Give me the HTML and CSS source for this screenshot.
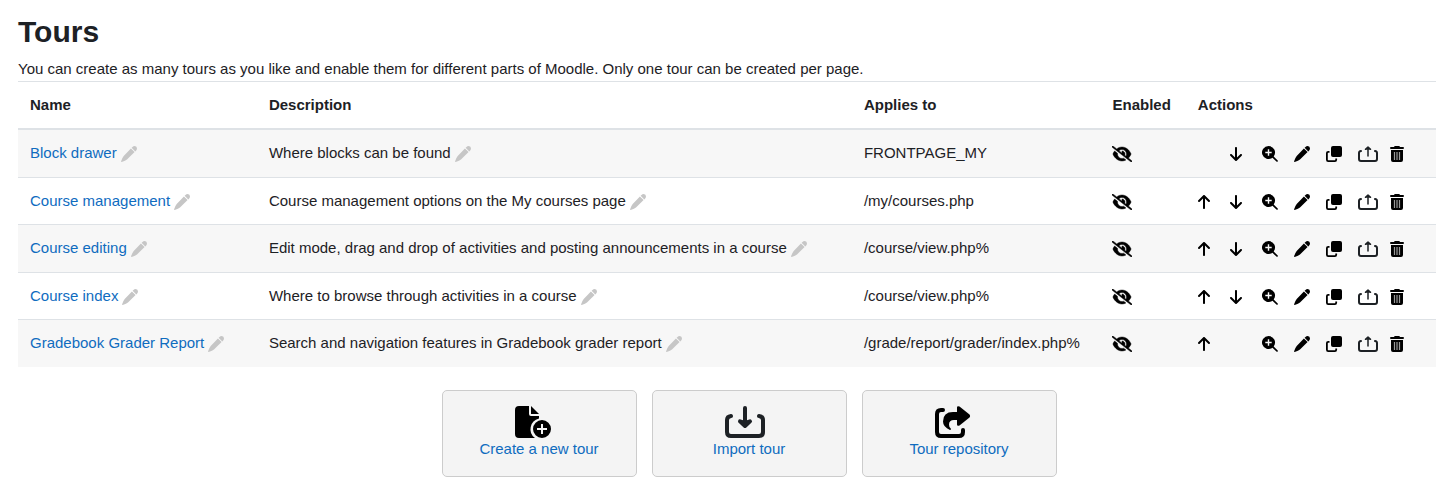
FILE: index.html
```html
<!DOCTYPE html>
<html lang="en">
<head>
<meta charset="utf-8">
<meta name="viewport" content="width=device-width, initial-scale=1">
<title>Tours</title>
<link rel="stylesheet" href="styles.css">
</head>
<body>
<svg class="sprite" aria-hidden="true">
  <symbol id="eye-slash" viewBox="0 0 640 512"><path stroke="currentColor" stroke-width="14" d="M38.8 5.1C28.4-3.1 13.3-1.2 5.1 9.2S-1.2 34.7 9.2 42.9l592 464c10.4 8.2 25.5 6.3 33.7-4.1s6.3-25.5-4.1-33.7L525.6 386.7c39.6-40.6 66.4-86.1 79.9-118.4c3.3-7.9 3.3-16.7 0-24.6c-14.9-35.7-46.2-87.7-93-131.1C465.5 68.8 400.8 32 320 32c-68.2 0-125 26.3-169.3 60.8L38.8 5.1zM223.1 149.5C248.6 126.2 282.7 112 320 112c79.5 0 144 64.5 144 144c0 24.9-6.3 48.3-17.4 68.7L408 294.5c8.4-19.3 10.6-41.4 4.8-63.3c-11.1-41.5-47.8-69.4-88.6-71.1c-5.8-.2-9.2 6.1-7.4 11.7c2.1 6.4 3.3 13.2 3.3 20.3c0 10.2-2.4 19.8-6.6 28.3l-90.3-70.8zM373 389.9c-16.4 6.5-34.3 10.1-53 10.1c-79.5 0-144-64.5-144-144c0-6.9 .5-13.6 1.4-20.2L83.1 161.5C60.3 191.2 44 220.8 34.5 243.7c-3.3 7.9-3.3 16.7 0 24.6c14.9 35.7 46.2 87.7 93 131.1C174.5 443.2 239.2 480 320 480c47.8 0 89.9-12.9 126.2-32.5L373 389.9z"/></symbol>
  <symbol id="up" viewBox="0 0 384 512"><path d="M214.6 41.4c-12.5-12.5-32.8-12.5-45.3 0l-160 160c-12.5 12.5-12.5 32.8 0 45.3s32.8 12.5 45.3 0L160 141.2V448c0 17.7 14.3 32 32 32s32-14.3 32-32V141.2L329.4 246.6c12.5 12.5 32.8 12.5 45.3 0s12.5-32.8 0-45.3l-160-160z"/></symbol>
  <symbol id="down" viewBox="0 0 384 512"><path transform="matrix(1 0 0 -1 0 512)" d="M214.6 41.4c-12.5-12.5-32.8-12.5-45.3 0l-160 160c-12.5 12.5-12.5 32.8 0 45.3s32.8 12.5 45.3 0L160 141.2V448c0 17.7 14.3 32 32 32s32-14.3 32-32V141.2L329.4 246.6c12.5 12.5 32.8 12.5 45.3 0s12.5-32.8 0-45.3l-160-160z"/></symbol>
  <symbol id="magnify" viewBox="0 0 16 16"><path fill-rule="evenodd" d="M6.5 0a6.5 6.5 0 0 1 5.2 10.4l4 4q.5.7 0 1.2-.6.5-1.3 0l-4-3.9A6.5 6.5 0 1 1 6.5 0zM5.8 3.3v2.5H3.3v1.4h2.500v2.500h1.400V7.200h2.500V5.800H7.200V3.300z"/></symbol>
  <symbol id="pencil" viewBox="0 0 16 16"><path d="M11.200 1.200Q12.400 0 13.700 0 16 .2 16 2.400 16 3.700 14.800 4.900L14.300 5.400 10.600 1.700zM9.900 2.400L13.600 6.100 6 13.400Q4.500 14.700 .7 15.900 0 16 .1 15.300 1.300 11.500 2.700 9.900z"/></symbol>
  <symbol id="copy" viewBox="0 0 16 16"><rect x="5" y="0" width="11" height="11" rx="2"/><path d="M3.500 5.800H2.200Q.9 5.800.9 7.100v6.700q0 1.300 1.300 1.300h6.700q1.300 0 1.300-1.300v-1.300" fill="none" stroke="currentColor" stroke-width="1.800"/></symbol>
  <symbol id="export" viewBox="0 0 40 32"><g fill="none" stroke="currentColor" stroke-width="4" stroke-linecap="round" stroke-linejoin="round"><path d="M6 10Q2 10.500 2 14V26Q2 30 6 30H34Q38 30 38 26V14Q38 10.500 34 10"/><path d="M20 3V20M15 6.700L20 2 25 6.700L20 5z" stroke-width="3" fill="currentColor"/></g></symbol>
  <symbol id="trash" viewBox="0 0 14 16"><path d="M4.200 .6Q4.500 0 5.200 0H8.800Q9.500 0 9.800.6L10.100 1H13Q14 1 14 2T13 3H1Q0 3 0 2T1 1H3.900zM1 4H13V14Q13 16 11 16H3Q1 16 1 14z"/><path d="M4.500 6V14M7 6V14M9.500 6V14" stroke="#999" stroke-width="1.200"/></symbol>
  <symbol id="new-file" viewBox="0 0 48 32"><path d="M4 0H14V8Q14 10 16 10H24V12.400A11 11 0 0 0 20 32H4Q0 32 0 28V4Q0 0 4 0zM16 0L24 8H16z"/><path fill-rule="evenodd" d="M27 14a9 9 0 1 1 0 18 9 9 0 0 1 0-18zM26 18V22H22V24H26V28H28V24H32V22H28V18z"/></symbol>
  <symbol id="import" viewBox="0 0 48 32"><g fill="none" stroke="currentColor" stroke-width="4" stroke-linecap="round" stroke-linejoin="round"><path d="M6 10Q2 10.500 2 14V26Q2 30 6 30H34Q38 30 38 26V14Q38 10.500 34 10"/><path d="M20 2V18M15 15.300L20 20 25 15.300L20 17z" fill="currentColor"/></g></symbol>
  <symbol id="share" viewBox="0 0 48 32"><path d="M8 4H6Q2 4 2 8V26Q2 30 6 30H24Q28 30 28 26V24" fill="none" stroke="#000" stroke-width="4" stroke-linecap="round"/><path d="M22 1.500Q22-.5 24.500.5L34.500 8.600Q35.700 10 34.500 11.400L24.500 19.500Q22 20.500 22 18.500V14H19Q14 14 14 18.500Q14 21 15.600 22.300Q16.500 24 15 24Q8 21 8 15.500Q8 6 18 6H22z"/></symbol>
</svg>
<main class="page">
  <h2 class="title">Tours</h2>
  <p class="intro">You can create as many tours as you like and enable them for different parts of Moodle. Only one tour can be created per page.</p>
  <table class="tours">
    <colgroup><col class="col-name"><col class="col-description"><col class="col-applies"><col class="col-enabled"><col></colgroup>
    <thead>
      <tr><th scope="col">Name</th><th scope="col">Description</th><th scope="col">Applies to</th><th scope="col">Enabled</th><th scope="col">Actions</th></tr>
    </thead>
    <tbody>
      <tr>
        <td><div class="editable"><a href="#">Block drawer</a><a class="edit" href="#" aria-label="Edit name"><svg class="icon"><use href="#pencil"/></svg></a></div></td>
        <td><div class="editable"><span>Where blocks can be found</span><a class="edit" href="#" aria-label="Edit description"><svg class="icon"><use href="#pencil"/></svg></a></div></td>
        <td>FRONTPAGE_MY</td>
        <td><div class="actions"><a href="#" aria-label="Enable"><svg class="icon wide"><use href="#eye-slash"/></svg></a></div></td>
        <td><div class="actions"><span></span><a href="#" aria-label="Move down"><svg class="icon arrow"><use href="#down"/></svg></a><a href="#" aria-label="View"><svg class="icon"><use href="#magnify"/></svg></a><a href="#" aria-label="Edit"><svg class="icon"><use href="#pencil"/></svg></a><a href="#" aria-label="Duplicate"><svg class="icon"><use href="#copy"/></svg></a><a class="soft" href="#" aria-label="Export"><svg class="icon wide"><use href="#export"/></svg></a><a href="#" aria-label="Delete"><svg class="icon bin"><use href="#trash"/></svg></a></div></td>
      </tr>
      <tr>
        <td><div class="editable"><a href="#">Course management</a><a class="edit" href="#" aria-label="Edit name"><svg class="icon"><use href="#pencil"/></svg></a></div></td>
        <td><div class="editable"><span>Course management options on the My courses page</span><a class="edit" href="#" aria-label="Edit description"><svg class="icon"><use href="#pencil"/></svg></a></div></td>
        <td>/my/courses.php</td>
        <td><div class="actions"><a href="#" aria-label="Enable"><svg class="icon wide"><use href="#eye-slash"/></svg></a></div></td>
        <td><div class="actions"><a href="#" aria-label="Move up"><svg class="icon arrow"><use href="#up"/></svg></a><a href="#" aria-label="Move down"><svg class="icon arrow"><use href="#down"/></svg></a><a href="#" aria-label="View"><svg class="icon"><use href="#magnify"/></svg></a><a href="#" aria-label="Edit"><svg class="icon"><use href="#pencil"/></svg></a><a href="#" aria-label="Duplicate"><svg class="icon"><use href="#copy"/></svg></a><a class="soft" href="#" aria-label="Export"><svg class="icon wide"><use href="#export"/></svg></a><a href="#" aria-label="Delete"><svg class="icon bin"><use href="#trash"/></svg></a></div></td>
      </tr>
      <tr>
        <td><div class="editable"><a href="#">Course editing</a><a class="edit" href="#" aria-label="Edit name"><svg class="icon"><use href="#pencil"/></svg></a></div></td>
        <td><div class="editable"><span>Edit mode, drag and drop of activities and posting announcements in a course</span><a class="edit" href="#" aria-label="Edit description"><svg class="icon"><use href="#pencil"/></svg></a></div></td>
        <td>/course/view.php%</td>
        <td><div class="actions"><a href="#" aria-label="Enable"><svg class="icon wide"><use href="#eye-slash"/></svg></a></div></td>
        <td><div class="actions"><a href="#" aria-label="Move up"><svg class="icon arrow"><use href="#up"/></svg></a><a href="#" aria-label="Move down"><svg class="icon arrow"><use href="#down"/></svg></a><a href="#" aria-label="View"><svg class="icon"><use href="#magnify"/></svg></a><a href="#" aria-label="Edit"><svg class="icon"><use href="#pencil"/></svg></a><a href="#" aria-label="Duplicate"><svg class="icon"><use href="#copy"/></svg></a><a class="soft" href="#" aria-label="Export"><svg class="icon wide"><use href="#export"/></svg></a><a href="#" aria-label="Delete"><svg class="icon bin"><use href="#trash"/></svg></a></div></td>
      </tr>
      <tr>
        <td><div class="editable"><a href="#">Course index</a><a class="edit" href="#" aria-label="Edit name"><svg class="icon"><use href="#pencil"/></svg></a></div></td>
        <td><div class="editable"><span>Where to browse through activities in a course</span><a class="edit" href="#" aria-label="Edit description"><svg class="icon"><use href="#pencil"/></svg></a></div></td>
        <td>/course/view.php%</td>
        <td><div class="actions"><a href="#" aria-label="Enable"><svg class="icon wide"><use href="#eye-slash"/></svg></a></div></td>
        <td><div class="actions"><a href="#" aria-label="Move up"><svg class="icon arrow"><use href="#up"/></svg></a><a href="#" aria-label="Move down"><svg class="icon arrow"><use href="#down"/></svg></a><a href="#" aria-label="View"><svg class="icon"><use href="#magnify"/></svg></a><a href="#" aria-label="Edit"><svg class="icon"><use href="#pencil"/></svg></a><a href="#" aria-label="Duplicate"><svg class="icon"><use href="#copy"/></svg></a><a class="soft" href="#" aria-label="Export"><svg class="icon wide"><use href="#export"/></svg></a><a href="#" aria-label="Delete"><svg class="icon bin"><use href="#trash"/></svg></a></div></td>
      </tr>
      <tr>
        <td><div class="editable"><a href="#">Gradebook Grader Report</a><a class="edit" href="#" aria-label="Edit name"><svg class="icon"><use href="#pencil"/></svg></a></div></td>
        <td><div class="editable"><span>Search and navigation features in Gradebook grader report</span><a class="edit" href="#" aria-label="Edit description"><svg class="icon"><use href="#pencil"/></svg></a></div></td>
        <td>/grade/report/grader/index.php%</td>
        <td><div class="actions"><a href="#" aria-label="Enable"><svg class="icon wide"><use href="#eye-slash"/></svg></a></div></td>
        <td><div class="actions"><a href="#" aria-label="Move up"><svg class="icon arrow"><use href="#up"/></svg></a><span></span><a href="#" aria-label="View"><svg class="icon"><use href="#magnify"/></svg></a><a href="#" aria-label="Edit"><svg class="icon"><use href="#pencil"/></svg></a><a href="#" aria-label="Duplicate"><svg class="icon"><use href="#copy"/></svg></a><a class="soft" href="#" aria-label="Export"><svg class="icon wide"><use href="#export"/></svg></a><a href="#" aria-label="Delete"><svg class="icon bin"><use href="#trash"/></svg></a></div></td>
      </tr>
    </tbody>
  </table>
  <nav class="tasks" aria-label="Tour tasks">
    <a class="task" href="#"><svg class="task-icon"><use href="#new-file"/></svg><span>Create a new tour</span></a>
    <a class="task" href="#"><svg class="task-icon soft"><use href="#import"/></svg><span>Import tour</span></a>
    <a class="task" href="#"><svg class="task-icon"><use href="#share"/></svg><span>Tour repository</span></a>
  </nav>
</main>
</body>
</html>
```
FILE: styles.css
```css
* { box-sizing: border-box; }

body {
  margin: 0;
  background: #fff;
  color: #1d2125;
  font-family: "Liberation Sans", Arial, sans-serif;
  font-size: 15px;
  line-height: 1.5;
}

a { color: #0f6cbf; text-decoration: none; }

.sprite { position: absolute; width: 0; height: 0; }

.page { padding: 14px 0 16px 18px; }

.title { margin: 0 0 8px; font-size: 30px; line-height: 1.2; }

.intro { margin: 0; }

.tours {
  width: 100%;
  table-layout: fixed;
  border-collapse: collapse;
}
.col-name { width: 16.85%; }
.col-description { width: 41.96%; }
.col-applies { width: 17.53%; }
.col-enabled { width: 6.02%; }

.tours th,
.tours td {
  padding: 12px;
  border-top: 1px solid #dee2e6;
  text-align: left;
  vertical-align: top;
}
.tours thead th { border-bottom: 2px solid #dee2e6; vertical-align: bottom; white-space: nowrap; }
.tours tbody tr:nth-child(odd) { background: #f7f7f7; }

.editable { display: flex; align-items: center; gap: 4px; }
.edit { display: flex; flex: none; padding-top: 2px; color: #c6c6c6; }

.actions { display: flex; align-items: center; height: 1.5em; padding-top: 2px; }
.actions > * { display: flex; flex: 0 0 32px; color: #000; }
.actions > .soft,
.soft { color: #1d2125; }

.icon { display: block; flex: none; width: 16px; height: 16px; fill: currentColor; }
.wide { width: 20px; }
.arrow { width: 12px; }
.bin { width: 14px; }

.tasks {
  display: flex;
  flex-wrap: wrap;
  justify-content: center;
  gap: 15px;
  padding: 23px 0 0 44px;
}
.task {
  display: flex;
  flex-direction: column;
  align-items: center;
  width: 195px;
  padding: 15px 15px 16px;
  border: 1px solid #ccc;
  border-radius: 5px;
  background: #f4f4f4;
}
.task-icon { width: 48px; height: 32px; color: #000; fill: currentColor; }
.task-icon.soft { color: #1d2125; }
```
